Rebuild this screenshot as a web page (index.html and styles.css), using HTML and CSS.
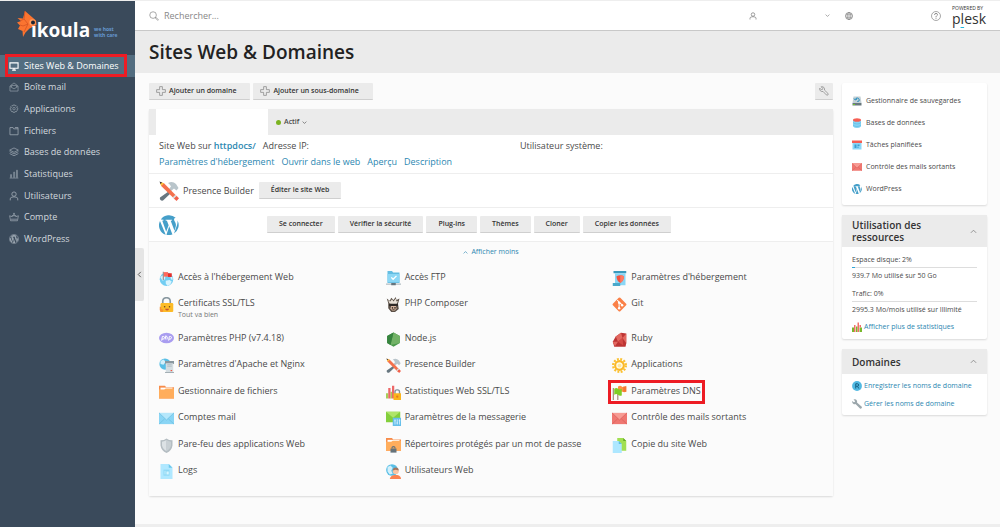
FILE: index.html
```html
<!DOCTYPE html>
<html lang="fr">
<head>
<meta charset="utf-8">
<meta name="viewport" content="width=device-width, initial-scale=1">
<title>Sites Web &amp; Domaines</title>
<link rel="stylesheet" href="styles.css">
</head>
<body>
<svg class="sprite" aria-hidden="true">
  <symbol id="i-screen" viewBox="0 0 16 16"><path d="M1.500 3h13v8.500h-13zM5 14.500h6M8 11.500v2" fill="none" stroke="currentColor" stroke-width="1.800"/></symbol>
  <symbol id="i-mailbox" viewBox="0 0 16 16"><path d="M1.500 6.500 8 1.500l6.500 5V14.500h-13zM1.500 7 8 11l6.500-4M4 8V5.500h8V8" fill="none" stroke="currentColor"/></symbol>
  <symbol id="i-gear" viewBox="0 0 16 16"><path d="M6.700 1.500h2.600l.4 1.800 1.600-1 1.900 1.900-1 1.600 1.800.4v2.600l-1.800.5 1 1.500-1.900 1.900-1.600-1-.4 1.800H6.700l-.4-1.800-1.600 1-1.900-1.900 1-1.500L2 8.800V6.200l1.800-.4-1-1.600 1.900-1.900 1.600 1z" fill="none" stroke="currentColor"/><circle cx="8" cy="7.500" r="2" fill="none" stroke="currentColor"/></symbol>
  <symbol id="i-files" viewBox="0 0 16 16"><path d="M1.500 2.500h5l1 2h7v9.500h-13zM9.500 2.500h5v2" fill="none" stroke="currentColor" stroke-width="1.300"/></symbol>
  <symbol id="i-layers" viewBox="0 0 16 16"><path d="M8 1.500 15 5 8 8.500 1 5zM1 7.500 8 11l7-3.500M1 10.500 8 14l7-3.500" fill="none" stroke="currentColor" stroke-width="1.200"/></symbol>
  <symbol id="i-bars" viewBox="0 0 16 16"><path d="M1 14.500h14M2.500 14V9h1.500v5M7.500 14V5H9v9M12 14V2h1.500v12" fill="none" stroke="currentColor"/></symbol>
  <symbol id="i-user" viewBox="0 0 16 16"><circle cx="8" cy="5" r="3.500" fill="none" stroke="currentColor" stroke-width="1.400"/><path d="M2 15v-2.500q0-2 2.500-2.500l2-.5h3l2 .5q2.500.5 2.500 2.500V15" fill="none" stroke="currentColor" stroke-width="1.400"/></symbol>
  <symbol id="i-crown" viewBox="0 0 16 16"><path d="M2.500 14 1 6l4 1.500L8 3.500l3 4L15 6l-1.500 8zM3 11.500h10M4.500 6h7" fill="none" stroke="currentColor" stroke-width="1.200"/><circle cx="8" cy="2.500" r="1.200" fill="currentColor"/></symbol>
  <symbol id="i-wp" viewBox="0 0 20 20"><circle cx="10" cy="10" r="9.200" fill="none" stroke="currentColor" stroke-width="1.100"/><use href="#wp-shape"/></symbol>
  <symbol id="c-wp" viewBox="1.800 1.800 16.400 16.400"><use href="#wp-shape"/></symbol>
  <defs><path id="wp-shape" d="M2.600 6.700 7.300 18A8.200 8.200 0 0 1 2.600 6.700zM3.300 5.500A8.200 8.200 0 0 1 15.500 4c-1.300.1-1.700 1.600-1 2.800.9 1.500 1.500 2.700 1 4.600l-1 3.400L11.400 6.500l1.100-.2v-.7H7.200v.7l1.100.2 1.400 3.700-2 5.300L4.500 6.500l1-.2v-.7zM10.200 11l2.600 6.800a8.200 8.200 0 0 1-4.900.1zM16.900 6.100a8.200 8.200 0 0 1-2.800 10.900l2.500-7.100c.4-1.300.5-2.600.3-3.800z" fill="currentColor"/></defs>
  <symbol id="i-search" viewBox="0 0 16 16"><circle cx="6.500" cy="6.500" r="5.300" fill="none" stroke="currentColor"/><path d="m10 11 1-1 4 4-1 1z" fill="none" stroke="currentColor"/></symbol>
  <symbol id="i-globe" viewBox="0 0 16 16"><g fill="none" stroke="currentColor"><circle cx="8" cy="8" r="7" stroke-width="1.500"/><ellipse cx="8" cy="8" rx="3.500" ry="7"/><path d="M8 1v14M2 5.500h12M2 10.500h12"/></g></symbol>
  <symbol id="i-help" viewBox="0 0 16 16"><g fill="none" stroke="currentColor"><circle cx="8" cy="8" r="7.200"/><path d="M5.700 6.300q0-2.500 2.300-2.500t2.300 2.100q0 1.200-1.300 2T8 10M8 11v1.400" stroke-width="1.300"/></g></symbol>
  <symbol id="i-plus" viewBox="0 0 16 16"><path d="M5.800 1h4.400v4.800H15v4.400h-4.800V15H5.800v-4.800H1V5.800h4.800z" fill="none" stroke="currentColor" stroke-width="1.200"/></symbol>
  <symbol id="i-wrench" viewBox="0 0 16 16"><path d="M3.500 1.200 6 3.700 5.500 5.500 3.700 6 1.200 3.500Q.5 6 2.300 7.800T6.500 8.700l5.200 5.500q1.300 1.200 2.500 0t0-2.500L8.700 6.500Q9.500 4 7.800 2.300T3.500 1.200z" fill="none" stroke="currentColor" stroke-width="1.200"/></symbol>
  <symbol id="i-down" viewBox="0 0 8 8"><path d="m1 2.500 3 3 3-3" fill="none" stroke="currentColor"/></symbol>
  <symbol id="i-up" viewBox="0 0 8 8"><path d="m1 5.500 3-3 3 3" fill="none" stroke="currentColor"/></symbol>
  <symbol id="i-left" viewBox="0 0 8 8"><path d="m5.500 1-3 3 3 3" fill="none" stroke="currentColor"/></symbol>
  <symbol id="c-tools" viewBox="0 0 20 20"><path d="m9.500 10.500 2 2L4 19.500q-1.500.5-2.500-.5T1 16.500z" fill="#687780"/><path d="M9 2q4.500-2.500 8 1l2.500 4-2 2.500-2.500-2L12 10l-2-2 2-2.500Q11 3 9 2z" fill="#b9c5cb"/><path d="m1 1 4 1.200L18.500 16 16 18.500 2.200 5z" fill="#f4714d"/><path d="m1 1 4 1.200L2.200 5z" fill="#ffca3c"/><path d="m.5.5 2.500 1L1.600 3z" fill="#333"/><path d="m16.300 13.800 1.200 1.200-2.500 2.500-1.200-1.200z" fill="#d7dee1"/><path d="m17.800 15.300 2.200 2-2.500 2.700-2.200-2.200z" fill="#f2604b"/></symbol>
  <symbol id="c-web" viewBox="0 0 20 20"><circle cx="10" cy="11" r="9" fill="#72cdf2"/><path d="m1.500 8 4-2.500 3 1.500L8 11l-3 2-1.500-2zM9 13l5-1 3 2-2 4-4 1.500-2-3zM15 7l3 1v4l-2-1z" fill="#d8f3fd"/><path d="M5 1h1.500v11H5z" fill="#9b8d87"/><path d="M6.500 1.500h5.500v6H6.500z" fill="#ff6a5c"/><path d="M12 3h5v5h-5z" fill="#e92f2a"/></symbol>
  <symbol id="c-lock" viewBox="0 0 20 20"><path d="M5 9V6q0-5 5-5t5 5v3" fill="none" stroke="#8998a0" stroke-width="2.200"/><rect x="2" y="8" width="17" height="12" rx="1.500" fill="#fcbb27"/><circle cx="7.500" cy="13" r="1" fill="#624423"/><circle cx="14" cy="13" r="1" fill="#624423"/><path d="M8 15.500h5.500q-1 2.500-2.700 2.500T8 15.500z" fill="#c85532"/><path d="M1 13h2v3l3 1-1 3H2q-1.500-3-1-7z" fill="#f69131"/></symbol>
  <symbol id="c-php" viewBox="0 0 20 20"><ellipse cx="10" cy="8" rx="10" ry="7" fill="#a99df0"/><g fill="none" stroke="#fff" stroke-width="1.300"><path d="M3.500 11.500 4.500 6h1.800q1.300.2 1 1.700T5.500 9.500H4M9.200 4.500 8.200 10M9 6.500q2.300-1 2.200.7l-.6 2.800M12.800 11.500l1-5.500h1.800q1.300.2 1 1.700t-1.800 1.800h-1.500"/></g></symbol>
  <symbol id="c-apache" viewBox="0 0 20 20"><circle cx="8" cy="8" r="7.500" fill="#59bfe6"/><path d="m2 4 4-2 3 3-3 4-4-1z" fill="#d3f0fb"/><path d="M8 4h12v4H8z" fill="#8a989f"/><path d="M9 7h10v12H9z" fill="#d4dde1"/><path d="M11 9h6M11 11h6" stroke="#aab7bd"/><path d="M15.500 16h2v1.500h-2z" fill="#f4553f"/><path d="M8 19h12v1H8z" fill="#8a989f"/></symbol>
  <symbol id="c-folder" viewBox="0 0 20 20"><path d="M0 1h8l1.500 2H20v15H0z" fill="#f78c4a"/><path d="M2 3.500h16V7H2z" fill="#fff"/><path d="M0 6h7l2-1.500h11V18H0z" fill="#ffad5c"/></symbol>
  <symbol id="c-mail" viewBox="0 0 20 20"><path d="M0 2.500h20v15H0z" fill="#8ad5f5"/><path d="m0 2.500 10 9.500 10-9.500z" fill="#b5e7fb"/><path d="m0 17.500 7.500-7M20 17.500l-7.500-7M0 2.500 10 12l10-9.500" fill="none" stroke="#6bbfe0"/></symbol>
  <symbol id="c-shield" viewBox="0 0 20 20"><path d="M2 3q5 0 8-2.500Q13 3 18 3v7q-1 7-8 10-7-3-8-10z" fill="#b4bdc2"/><path d="M4 5q4-.5 6-2.200V17.500Q5 15 4 10z" fill="#dce2e5"/><path d="M10 2.800Q12 4.500 16 5v5q-1 5-6 7.500z" fill="#c8d0d4"/></symbol>
  <symbol id="c-log" viewBox="0 0 20 20"><path d="M2 0h11l5 5v15H2z" fill="#b0e8ff"/><path d="M13 0v5h5z" fill="#6cc8ed"/><path d="M6 7.500h8v8H6z" fill="#8ed8f5"/><path d="M7.500 9h1v5h-1zM10 10h3v4h-3z" fill="#d6f5ff"/></symbol>
  <symbol id="c-ftp" viewBox="0 0 20 20"><path d="M2 0h6l1.500 2H18v14H2z" fill="#64bde2"/><path d="M2 4h16v11H2z" fill="#8cd7f5"/><path d="m7 8.500 2.500 2.500L14 6.500" fill="none" stroke="#fff" stroke-width="1.800"/><path d="M0 17.500h20" stroke="#a9b6bc" stroke-width="1.500"/><path d="M7 16h6v3H7z" fill="#66757d"/></symbol>
  <symbol id="c-composer" viewBox="0 0 20 20"><path d="M3 8 1 2l4 3 2-4 3 3 3-4 1 4 4-2-2 7 1 7-5 4H7l-4-5z" fill="#5b5047"/><path d="M5 9 2.500 4l3 2L8 3l2 3 3-4 1 4 2-1-2 5z" fill="#e9e1d6"/><path d="M7 11h6l1 4-2 3H8l-2-3z" fill="#d9b7a0"/><path d="M4 9h12v3H4z" fill="#2f2926"/><path d="M8 14h1v1H8zM11.500 14h1v1h-1zM8.500 16.500h3" stroke="#372b25" fill="#222"/></symbol>
  <symbol id="c-node" viewBox="0 0 20 20"><path d="m10 .5 8.500 4.800v9.500L10 19.500l-8.500-4.700V5.300z" fill="#4a994b"/><path d="m10 .5 8.500 4.800v9.500L6 17.300z" fill="#72b266"/><path d="M1.500 5.300 10 .5 6 17.300l-4.500-2.500z" fill="#37843f"/></symbol>
  <symbol id="c-chart" viewBox="0 0 20 20"><path d="M0 11h4v9H0zM8 9h3v11H8zM15 11h5v9h-5z" fill="#78b82b"/><path d="M4 6h3v14H4zM11 1h3v19h-3zM15 6h3v5h-3z" fill="#f0716a"/></symbol>
  <symbol id="c-chartlock" viewBox="0 0 20 20"><path d="M0 11h3v7H0zM6 9h2v9H6z" fill="#a6ce59"/><path d="M3 4h3v14H3zM8 1h3v17H8z" fill="#ed6868"/><path d="M12 12V9q0-2.500 2.500-2.500h1Q18 6.500 18 9v3" fill="none" stroke="#80909a" stroke-width="1.800"/><path d="M10 11h10v9H10z" fill="#fbb51c"/><circle cx="15" cy="15.500" r="1.500" fill="#e67c1e"/></symbol>
  <symbol id="c-mailset" viewBox="0 0 20 20"><path d="M0 1h19v14H0z" fill="#83cf3c"/><path d="m0 1 9.500 8L19 1z" fill="#afe569"/><path d="M9 9h11v11H9z" fill="#66bfea"/><path d="M12 11v7M15 11v7M18 11v7M11 13h2M14 16h2M17 13h2" stroke="#e4f6ff"/></symbol>
  <symbol id="c-folderlock" viewBox="0 0 20 20"><path d="M0 0h8l1.500 2H20v15H0z" fill="#f78c4a"/><path d="M2 2.500h16V6H2z" fill="#fff"/><path d="M0 5h7l2-1.500h11V17H0z" fill="#ffad5c"/><path d="M8 14v-1q0-1.500 2-1.500t2 1.500v1" fill="none" stroke="#65727a" stroke-width="1.500"/><path d="M6 14h8v5.500H6z" fill="#65727a"/></symbol>
  <symbol id="c-webuser" viewBox="0 0 20 20"><circle cx="8" cy="8" r="7.800" fill="#59bfe6"/><path d="m2 4 4-2 3 3-2 4 2 4-4 1-3-4z" fill="#d3f0fb"/><circle cx="13" cy="9.500" r="4" fill="#f8c5a4"/><path d="M9 8.500q0-4 4-4t4 4l-4-1z" fill="#a5745c"/><path d="M5 20q1-5 6-5.500h4q5 1 5 5.500z" fill="#fa8351"/></symbol>
  <symbol id="c-host" viewBox="0 0 20 20"><path d="M2 0h17v3H2z" fill="#3999bd"/><path d="M4 3h14v16H4z" fill="#89d6f5"/><path d="M1 16h10v4H1z" fill="#49a8ca"/><path d="M6 7q5-3 10 0 0 6-5 9-5-3-5-9z" fill="#f3523e"/><path d="M11 5.500Q14 5.500 16 7q0 6-5 9z" fill="#ff7a62"/></symbol>
  <symbol id="c-git" viewBox="0 0 20 20"><rect x="3" y="3" width="14" height="14" rx="1.500" transform="rotate(45 10 10)" fill="#fa8047"/><path d="m7 4 2.500 3v8M9.500 7l4 3.500" stroke="#fff" stroke-width="1.400" fill="none"/><circle cx="9.500" cy="7.500" r="1.600" fill="#fff"/><circle cx="13.500" cy="11" r="1.600" fill="#fff"/><circle cx="9.500" cy="15" r="1.600" fill="#fff"/></symbol>
  <symbol id="c-ruby" viewBox="0 0 20 20"><path d="m1 13 4-7 7-5 7 1v13l-1 4.500H3z" fill="#bd3434"/><path d="m5 6 7-5 2 7-6 5zM14 8l5-6v13zM1 13h7l-4 6z" fill="#e26860"/><path d="m8 13 6-5 1 10z" fill="#d44a45"/></symbol>
  <symbol id="c-sun" viewBox="0 0 20 20"><circle cx="10" cy="10" r="8.500" fill="none" stroke="#fbc02d" stroke-width="3" stroke-dasharray="2.500 1.950"/><circle cx="10" cy="10" r="5.800" fill="#fffbe6" stroke="#fbb929" stroke-width="2.800"/><circle cx="10" cy="10" r="2.500" fill="#ffe79a"/></symbol>
  <symbol id="c-flags" viewBox="0 0 20 20"><path d="M1 4h1.500v16H1zM7 9h1.500v11H7z" fill="#a08470"/><path d="M8 2q3-2 5 0t6-1v8q-3 1-5 0t-6 0z" fill="#ff9142"/><path d="M3 5q3-2 5 0t5 0v9q-3 1-5-1t-5 0z" fill="#7fce25"/><path d="M15 2h4v7h-4z" fill="#f47635"/></symbol>
  <symbol id="c-mailred" viewBox="0 0 20 20"><path d="M0 2.500h20v15H0z" fill="#ef7771"/><path d="m0 2.500 10 9.500 10-9.500z" fill="#f79b93"/><path d="m0 17.500 7.500-7M20 17.500l-7.500-7M0 2.500 10 12l10-9.500" fill="none" stroke="#da5f5b"/></symbol>
  <symbol id="c-copy" viewBox="0 0 20 20"><path d="M7 0h8l4 4v13H7z" fill="#a1df52"/><path d="M15 0v4h4z" fill="#65ac25"/><path d="M1 4h8l4 4v12H1z" fill="#ade7ff"/><path d="M9 4v4h4z" fill="#5bbfe6"/></symbol>
  <symbol id="c-backup" viewBox="0 0 20 20"><path d="M3 1h14l2 13H1z" fill="#c3d0d5"/><path d="M1 14h18v5H1z" fill="#67777d"/><path d="M2 16h4v2H2z" fill="#74c92e"/><path d="M6.500 7q1-3 4-3t4 3.500-4 3.500M4 5l2.500 3L10 6" fill="none" stroke="#1689bd" stroke-width="1.800"/></symbol>
  <symbol id="c-db" viewBox="0 0 20 20"><path d="M2 4h16v13q-3 3-8 3t-8-3z" fill="#86d3f4"/><path d="M2 9q3 3 8 3t8-3M2 14q3 3 8 3t8-3" fill="none" stroke="#4fb3dc"/><ellipse cx="10" cy="4" rx="8" ry="3.500" fill="#f65f54"/></symbol>
  <symbol id="c-cal" viewBox="0 0 20 20"><path d="M0 1h20v5H0z" fill="#f55e53"/><path d="M1 6h18v13H1z" fill="#8bd6f7"/><path d="M5 9h4v7H5zM11 9h4v3h-4zM11 13h2v3h-2z" fill="#3d9ed0"/></symbol>
  <symbol id="c-reg" viewBox="0 0 20 20"><circle cx="10" cy="10" r="9.800" fill="#51b9e2"/><path d="M7.500 15V5.500h3.300q2.500.2 2.500 2.500t-2.500 2.500H8M11 10.500l2.500 4.500" fill="none" stroke="#135f83" stroke-width="2"/></symbol>
  <symbol id="c-wrench" viewBox="0 0 20 20"><path d="m3 1 3 3-.5 2-2 .5L.5 4Q-.5 8 3 10q2 1 4 0l9 9q1.500 1 3-.5t.5-3L10 7q1-4-2-6-2-1-5 0z" fill="#9ca7ac"/></symbol>
</svg>

<div class="app">
  <aside class="sidebar">
    <a class="brand" href="#" aria-label="ikoula, we host with care">
      <svg class="fish" viewBox="0 0 20 26" aria-hidden="true"><path d="m8 0 11 9.500.5 4.500-7 3.500-4 4L6 26l-.500-6L1 18l2-3.500-3-3L4 10 .5 7l5.500.5z" fill="#fb7430"/><path d="m8 0-1 8 4 5-5 2-3-1M11 13l-4 8M7 8l-4 2" fill="none" stroke="#d55322" stroke-width=".8"/><circle cx="15.500" cy="11.500" r="3.200" fill="#ff9b5c"/><circle cx="16" cy="11.500" r="2" fill="#1d2534"/></svg>
      <span class="brand-name">ıkoula</span>
      <span class="brand-tag">we host<br>with care</span>
    </a>
    <nav class="nav" aria-label="Navigation">
      <a class="nav-item is-active" href="#"><svg class="nav-icon"><use href="#i-screen"/></svg>Sites Web &amp; Domaines</a>
      <a class="nav-item" href="#"><svg class="nav-icon"><use href="#i-mailbox"/></svg>Boîte mail</a>
      <a class="nav-item" href="#"><svg class="nav-icon"><use href="#i-gear"/></svg>Applications</a>
      <a class="nav-item" href="#"><svg class="nav-icon"><use href="#i-files"/></svg>Fichiers</a>
      <a class="nav-item" href="#"><svg class="nav-icon"><use href="#i-layers"/></svg>Bases de données</a>
      <a class="nav-item" href="#"><svg class="nav-icon"><use href="#i-bars"/></svg>Statistiques</a>
      <a class="nav-item" href="#"><svg class="nav-icon"><use href="#i-user"/></svg>Utilisateurs</a>
      <a class="nav-item" href="#"><svg class="nav-icon"><use href="#i-crown"/></svg>Compte</a>
      <a class="nav-item" href="#"><svg class="nav-icon"><use href="#i-wp"/></svg>WordPress</a>
    </nav>
  </aside>

  <div class="page">
    <button class="collapse" type="button" aria-label="Réduire le menu"><svg class="chevron"><use href="#i-left"/></svg></button>
    <header class="topbar">
      <label class="search"><svg class="top-icon"><use href="#i-search"/></svg><input class="search-input" type="search" placeholder="Rechercher..." aria-label="Rechercher"></label>
      <button class="top-btn account" type="button" aria-label="Compte utilisateur"><svg class="small-icon"><use href="#i-user"/></svg><svg class="caret"><use href="#i-down"/></svg></button>
      <button class="top-btn language" type="button" aria-label="Langue"><svg class="small-icon"><use href="#i-globe"/></svg></button>
      <button class="top-btn help" type="button" aria-label="Aide"><svg class="top-icon"><use href="#i-help"/></svg></button>
      <a class="plesk" href="#"><span class="plesk-by">POWERED BY</span><span class="plesk-name">p<span class="plesk-l">l</span>esk</span></a>
    </header>
    <div class="title-bar"><h1 class="title">Sites Web &amp; Domaines</h1></div>

    <div class="content">
      <main class="main">
        <div class="toolbar">
          <button class="btn btn-add" type="button"><svg class="top-icon"><use href="#i-plus"/></svg>Ajouter un domaine</button>
          <button class="btn btn-add" type="button"><svg class="top-icon"><use href="#i-plus"/></svg>Ajouter un sous-domaine</button>
          <button class="btn btn-icon" type="button" aria-label="Paramètres"><svg class="top-icon"><use href="#i-wrench"/></svg></button>
        </div>

        <section class="card domain">
          <div class="tabs">
            <span class="tab"></span>
            <button class="status" type="button"><span class="dot"></span>Actif<svg class="caret"><use href="#i-down"/></svg></button>
          </div>
          <div class="summary">
            <div class="facts">
              <p class="fact-group"><span>Site Web sur <a class="link strong" href="#">httpdocs/</a></span><span>Adresse IP:</span></p>
              <p class="fact-group">Utilisateur système:</p>
            </div>
            <div class="links">
              <a class="link" href="#">Paramètres d'hébergement</a><a class="link" href="#">Ouvrir dans le web</a><a class="link" href="#">Aperçu</a><a class="link" href="#">Description</a>
            </div>
          </div>
          <div class="tool-row">
            <svg class="big-icon"><use href="#c-tools"/></svg><span class="tool-name">Presence Builder</span>
            <button class="btn" type="button">Éditer le site Web</button>
          </div>
          <div class="tool-row">
            <svg class="big-icon wp"><use href="#c-wp"/></svg>
            <div class="btn-group">
              <button class="btn" type="button">Se connecter</button>
              <button class="btn" type="button">Vérifier la sécurité</button>
              <button class="btn" type="button">Plug-ins</button>
              <button class="btn" type="button">Thèmes</button>
              <button class="btn" type="button">Cloner</button>
              <button class="btn" type="button">Copier les données</button>
            </div>
          </div>
          <div class="more">
            <button class="toggle" type="button"><svg class="caret"><use href="#i-up"/></svg>Afficher moins</button>
            <div class="features">
              <a class="feature" href="#"><svg class="icon"><use href="#c-web"/></svg>Accès à l'hébergement Web</a>
              <a class="feature" href="#"><svg class="icon"><use href="#c-ftp"/></svg>Accès FTP</a>
              <a class="feature" href="#"><svg class="icon"><use href="#c-host"/></svg>Paramètres d'hébergement</a>
              <a class="feature" href="#"><svg class="icon"><use href="#c-lock"/></svg><span>Certificats SSL/TLS<small class="note">Tout va bien</small></span></a>
              <a class="feature" href="#"><svg class="icon"><use href="#c-composer"/></svg>PHP Composer</a>
              <a class="feature" href="#"><svg class="icon"><use href="#c-git"/></svg>Git</a>
              <a class="feature" href="#"><svg class="icon"><use href="#c-php"/></svg>Paramètres PHP (v7.4.18)</a>
              <a class="feature" href="#"><svg class="icon"><use href="#c-node"/></svg>Node.js</a>
              <a class="feature" href="#"><svg class="icon"><use href="#c-ruby"/></svg>Ruby</a>
              <a class="feature" href="#"><svg class="icon"><use href="#c-apache"/></svg>Paramètres d'Apache et Nginx</a>
              <a class="feature" href="#"><svg class="icon"><use href="#c-tools"/></svg>Presence Builder</a>
              <a class="feature" href="#"><svg class="icon"><use href="#c-sun"/></svg>Applications</a>
              <a class="feature" href="#"><svg class="icon"><use href="#c-folder"/></svg>Gestionnaire de fichiers</a>
              <a class="feature" href="#"><svg class="icon"><use href="#c-chartlock"/></svg>Statistiques Web SSL/TLS</a>
              <a class="feature is-marked" href="#"><svg class="icon"><use href="#c-flags"/></svg>Paramètres DNS</a>
              <a class="feature" href="#"><svg class="icon"><use href="#c-mail"/></svg>Comptes mail</a>
              <a class="feature" href="#"><svg class="icon"><use href="#c-mailset"/></svg>Paramètres de la messagerie</a>
              <a class="feature" href="#"><svg class="icon"><use href="#c-mailred"/></svg>Contrôle des mails sortants</a>
              <a class="feature" href="#"><svg class="icon"><use href="#c-shield"/></svg>Pare-feu des applications Web</a>
              <a class="feature" href="#"><svg class="icon"><use href="#c-folderlock"/></svg>Répertoires protégés par un mot de passe</a>
              <a class="feature" href="#"><svg class="icon"><use href="#c-copy"/></svg>Copie du site Web</a>
              <a class="feature" href="#"><svg class="icon"><use href="#c-log"/></svg>Logs</a>
              <a class="feature" href="#"><svg class="icon"><use href="#c-webuser"/></svg>Utilisateurs Web</a>
            </div>
          </div>
        </section>
      </main>

      <aside class="side">
        <section class="card shortcuts">
          <a class="shortcut" href="#"><svg class="side-icon"><use href="#c-backup"/></svg>Gestionnaire de sauvegardes</a>
          <a class="shortcut" href="#"><svg class="side-icon"><use href="#c-db"/></svg>Bases de données</a>
          <a class="shortcut" href="#"><svg class="side-icon"><use href="#c-cal"/></svg>Tâches planifiées</a>
          <a class="shortcut" href="#"><svg class="side-icon"><use href="#c-mailred"/></svg>Contrôle des mails sortants</a>
          <a class="shortcut" href="#"><svg class="side-icon wp"><use href="#c-wp"/></svg>WordPress</a>
        </section>
        <section class="card">
          <header class="card-head"><h2 class="card-title">Utilisation des ressources</h2><button class="fold" type="button" aria-label="Replier"><svg class="chevron"><use href="#i-up"/></svg></button></header>
          <div class="usage">
            <p>Espace disque: 2%</p>
            <div class="meter"><span class="meter-fill" style="width:2%"></span></div>
            <p>939.7 Mo utilisé sur 50 Go</p>
            <p class="usage-next">Trafic: 0%</p>
            <div class="meter"></div>
            <p>2995.3 Mo/mois utilisé sur Illimité</p>
            <a class="link side-link" href="#"><svg class="side-icon"><use href="#c-chart"/></svg>Afficher plus de statistiques</a>
          </div>
        </section>
        <section class="card">
          <header class="card-head"><h2 class="card-title">Domaines</h2><button class="fold" type="button" aria-label="Replier"><svg class="chevron"><use href="#i-up"/></svg></button></header>
          <div class="domain-links">
            <a class="link side-link" href="#"><svg class="side-icon"><use href="#c-reg"/></svg>Enregistrer les noms de domaine</a>
            <a class="link side-link" href="#"><svg class="side-icon"><use href="#c-wrench"/></svg>Gérer les noms de domaine</a>
          </div>
        </section>
      </aside>
    </div>
  </div>
</div>
</body>
</html>
```
FILE: styles.css
```css
* { box-sizing: border-box; }

body {
  margin: 0;
  background: #fbfbfb;
  color: #4a4a4a;
  font: 9px/12px "Open Sans", sans-serif;
}

p, h1, h2 { margin: 0; }
a { color: inherit; text-decoration: none; }
svg { flex: none; display: block; }
button, input { font: inherit; color: inherit; border: 0; padding: 0; background: none; }
button { cursor: pointer; }

.sprite { position: absolute; width: 0; height: 0; }
.icon { width: 15px; height: 15px; }
.big-icon { width: 20px; height: 20px; }
.side-icon, .nav-icon, .top-icon { width: 10px; height: 10px; }
.small-icon { width: 8px; height: 8px; }
.chevron { width: 7px; height: 7px; }
.caret { width: 5px; height: 5px; }
.wp { color: #459fc9; }
a.link { color: #2c87b1; }
.strong { font-weight: 600; }

.app {
  display: flex;
  min-height: 100vh;
  border-top: 1px solid #eee;
}

/* Left navigation */
.sidebar {
  flex: none;
  width: 135px;
  background: #3a4a5b;
}

.brand {
  display: flex;
  height: 54px;
  padding: 10px 0 0 17px;
  color: #fff;
}
.fish { width: 20px; height: 26px; }
.brand-name {
  margin-left: -6px;
  font-size: 19px;
  font-weight: 700;
  line-height: 38px;
}
.brand-tag {
  margin: 15px 0 0 4px;
  color: #6799d0;
  font-size: 5px;
  font-weight: 700;
  line-height: 6px;
}

.nav {
  display: grid;
  grid-auto-rows: 1fr;
  height: 195px;
}
.nav-item {
  display: flex;
  align-items: center;
  gap: 5px;
  padding-left: 9px;
  color: #d3d9de;
}
.nav-icon { color: #9ba6b0; }
.is-active { position: relative; background: #536d80; color: #fff; }
.is-active .nav-icon { color: #fff; }
.is-active::after, .is-marked::after {
  content: "";
  position: absolute;
  border: 3px solid #ed1c24;
}
.is-active::after { inset: -1px 8px 0 5px; }

/* Header */
.page { position: relative; flex: 1; min-width: 0; border-bottom: 3px solid #eee; }

.collapse {
  position: absolute;
  top: 247px;
  left: 0;
  display: grid;
  place-items: center;
  width: 9px;
  height: 53px;
  background: #e5e5e5;
  border-radius: 0 2px 2px 0;
}

.topbar {
  display: flex;
  align-items: center;
  height: 30px;
  padding: 0 13px 0 14px;
  background: #fff;
  border-bottom: 1px solid #c8c8c8;
  color: #777;
}
.search { flex: 1; display: flex; align-items: center; gap: 5px; }
.search-input { flex: 1; outline: 0; }
.search-input::placeholder { color: #888; opacity: 1; }
.top-btn { display: flex; align-items: center; }
.account { justify-content: space-between; width: 81px; }
.language { margin-left: 15px; }
.help { margin: 0 11px 0 78px; }
.plesk { width: 35px; color: #333; }
.plesk-by { display: block; font-size: 5px; line-height: 6px; white-space: nowrap; }
.plesk-name { display: block; font-size: 14px; line-height: 16px; }
.plesk-l { text-decoration: underline 1px #22b8dd; text-underline-offset: 3px; }

.title-bar { padding: 8px 14px; background: #ebebeb; }
.title { color: #222; font-size: 19px; font-weight: 600; line-height: 26px; }

/* Main column */
.content {
  display: flex;
  align-items: flex-start;
  gap: 9px;
  padding: 10px 13px 24px 14px;
}
.main { flex: 1; min-width: 0; }
.toolbar { display: flex; gap: 3px; margin-bottom: 9px; }

.btn {
  display: flex;
  align-items: center;
  height: 17px;
  padding: 0 12px;
  background: #ebebeb;
  border-bottom: 1px solid #cfcfcf;
  border-radius: 1px;
  color: #333;
  font-size: 7px;
  font-weight: 600;
  white-space: nowrap;
}
.btn-add { gap: 3px; padding: 0 14px 0 7px; }
.btn-add svg, .btn-icon svg { color: #888; }
.btn-icon { margin-left: auto; padding: 0 4px; }

.card {
  background: #fff;
  border-radius: 2px;
  box-shadow: 0 1px 2px #0002;
}
.tabs { display: flex; height: 26px; padding-left: 7px; background: #ebebeb; }
.tab { width: 112px; background: #fff; }
.status {
  display: flex;
  align-items: center;
  gap: 3px;
  margin-left: 8px;
  font-size: 7px;
  font-weight: 600;
}
.dot { width: 5px; height: 5px; border-radius: 50%; background: #7bb320; }

.summary { padding: 5px 10px; }
.facts { display: grid; grid-template-columns: 361px 1fr; }
.fact-group, .links { display: flex; gap: 7px; }
.links { margin-top: 4px; }

.tool-row {
  display: flex;
  align-items: center;
  min-height: 34px;
  padding: 0 10px;
  border-top: 1px solid #eee;
}
.tool-name { margin: 0 5px 0 4px; }
.btn-group { display: flex; gap: 3px; margin-left: 88px; }

.more {
  padding: 4px 10px 17px;
  background: #fbfbfb;
  border-top: 1px solid #eee;
}
.toggle {
  display: flex;
  align-items: center;
  gap: 3px;
  margin: 0 auto 13px;
  color: #2c87b1;
  font-size: 7px;
}
.features {
  display: grid;
  grid-template-columns: repeat(3, 1fr);
  gap: 11px 16px;
  align-content: space-between;
  min-height: 208px;
}
.feature { position: relative; display: flex; align-items: flex-start; gap: 4px; }
.note { display: block; color: #777; font-size: 7px; line-height: 11px; }
.is-marked { justify-self: start; }
.is-marked::after { inset: -5px -4px -4px -4px; }

/* Right column */
.side {
  flex: none;
  display: grid;
  grid-template-columns: minmax(0, 1fr);
  gap: 10px;
  width: 145px;
  font-size: 7px;
}
.shortcuts { display: grid; gap: 10px; padding: 12px 10px 10px; }
.shortcut, .side-link { display: flex; align-items: center; gap: 4px; }
.side-link { gap: 2px; white-space: nowrap; }
.card-head {
  display: flex;
  align-items: center;
  justify-content: space-between;
  min-height: 25px;
  padding: 4px 10px;
  background: #ebebeb;
}
.card-title { max-width: 80px; color: #333; font-size: 10px; font-weight: 600; }
.fold { color: #888; }
.usage { padding: 7px 10px 6px; }
.usage-next { margin-top: 6px; }
.meter { height: 1px; margin: 1px 0 2px; background: #ddd; }
.meter-fill { display: block; height: 1px; background: #2ca5d8; }
.usage .side-link { margin-top: 5px; }
.domain-links { display: grid; gap: 6px; padding: 6px 10px 5px; }
```
